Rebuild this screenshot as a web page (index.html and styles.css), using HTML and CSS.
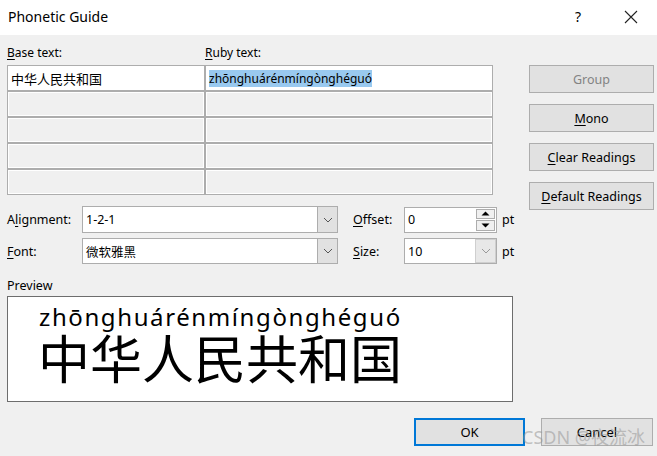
FILE: index.html
```html
<!DOCTYPE html>
<html>
<head>
<meta charset="utf-8">
<link rel="stylesheet" href="styles.css">
</head>
<body>
<div class="dialog">
  <div class="titlebar">
    <span class="title">Phonetic Guide</span>
    <div class="title-icons">
      <span class="help">?</span>
      <svg class="close" width="14" height="14" viewBox="0 0 14 14"><path d="M1 1 L13 13 M13 1 L1 13" stroke="#222" stroke-width="1.1" fill="none"/></svg>
    </div>
  </div>
  <div class="content">
    <div class="top">
      <div class="table-area">
        <div class="heads">
          <span class="head-base"><u>B</u>ase text:</span>
          <span class="head-ruby"><u>R</u>uby text:</span>
        </div>
        <div class="rtable">
          <div class="cell active cjk">中华人民共和国</div>
          <div class="cell active"><span class="sel">zhōnghuárénmíngònghéguó</span></div>
          <div class="cell"></div><div class="cell"></div>
          <div class="cell"></div><div class="cell"></div>
          <div class="cell"></div><div class="cell"></div>
          <div class="cell"></div><div class="cell"></div>
        </div>
      </div>
      <div class="side">
        <div class="btn disabled">Group</div>
        <div class="btn"><u>M</u>ono</div>
        <div class="btn"><u>C</u>lear Readings</div>
        <div class="btn"><u>D</u>efault Readings</div>
      </div>
    </div>
    <div class="form">
      <span class="lbl">A<u>l</u>ignment:</span>
      <div class="combo r1"><span class="val">1-2-1</span><span class="drop"><svg width="10" height="6" viewBox="0 0 10 6"><path d="M1 1 L5 5 L9 1" stroke="#555" fill="none"/></svg></span></div>
      <span></span>
      <span class="lbl"><u>O</u>ffset:</span>
      <div class="spin r1"><span class="val">0</span><span class="spinbtns"><span class="sb"><svg width="9" height="5" viewBox="0 0 9 5"><path d="M0.5 4.5 L4.5 0.5 L8.5 4.5 Z" fill="#000"/></svg></span><span class="sb"><svg width="9" height="5" viewBox="0 0 9 5"><path d="M0.5 0.5 L4.5 4.5 L8.5 0.5 Z" fill="#000"/></svg></span></span></div>
      <span class="pt">pt</span>

      <span class="lbl"><u>F</u>ont:</span>
      <div class="combo r2"><span class="val cjk">微软雅黑</span><span class="drop"><svg width="10" height="6" viewBox="0 0 10 6"><path d="M1 1 L5 5 L9 1" stroke="#555" fill="none"/></svg></span></div>
      <span></span>
      <span class="lbl"><u>S</u>ize:</span>
      <div class="combo r2 small"><span class="val">10</span><span class="drop light"><svg width="10" height="6" viewBox="0 0 10 6"><path d="M1 1 L5 5 L9 1" stroke="#999" fill="none"/></svg></span></div>
      <span class="pt">pt</span>
    </div>
    <div class="preview-label">Preview</div>
    <div class="preview">
      <div class="ruby-block">
        <div class="pinyin">zhōnghuárénmíngònghéguó</div>
        <div class="hanzi">中华人民共和国</div>
      </div>
    </div>
    <div class="footer">
      <div class="btn ok">OK</div>
      <div class="btn cancel">Cancel</div>
      <span class="watermark">CSDN @夜流冰</span>
    </div>
  </div>
</div>
</body>
</html>
```

FILE: styles.css
```css
* { box-sizing: border-box; }
html, body { margin: 0; padding: 0; }
body {
  width: 657px;
  height: 456px;
  overflow: hidden;
  background: #f0f0f0;
  font-family: "Noto Sans", "Noto Sans CJK SC", sans-serif;
  font-size: 12px;
  color: #000;
}
u { text-decoration: underline; text-underline-offset: 2px; }
.cjk { font-family: "Noto Sans CJK SC", sans-serif; }

.titlebar {
  height: 35px;
  background: #fff;
  display: flex;
  align-items: center;
  justify-content: space-between;
  padding: 0 19px 2px 8px;
}
.title { font-size: 14px; }
.title-icons { display: flex; align-items: center; gap: 43px; }
.help { font-size: 14px; }
.close { display: block; }

.content { padding: 0 4px 0 7px; position: relative; }

.top { display: flex; align-items: flex-start; height: 159px; }
.table-area { width: 486px; }
.heads { height: 30px; display: flex; align-items: center; padding-top: 5px; }
.head-base { width: 198px; }
.rtable {
  display: grid;
  grid-template-columns: 196px 286px;
  grid-auto-rows: 24px;
  gap: 2px;
  padding: 1px;
  background: #adadad;
}
.cell { background: #f0f0f0; border: 1px solid #fff; }
.cell.active {
  background: #fff;
  display: flex;
  align-items: center;
  padding-left: 2px;
  font-size: 13px;
}
.sel { background: #99c9ef; line-height: 17px; font-size: 12px; }

.side {
  margin-left: 36px;
  padding-top: 30px;
  display: flex;
  flex-direction: column;
  gap: 11px;
}
.btn {
  width: 125px;
  height: 28px;
  background: #e1e1e1;
  border: 1px solid #adadad;
  display: flex;
  align-items: center;
  justify-content: center;
  font-size: 12.5px;
}
.btn.disabled { color: #838383; }

.form {
  margin-top: 12px;
  display: grid;
  grid-template-columns: 75px 256px 15px 51px 93px auto;
  grid-template-rows: 27px 26px;
  row-gap: 5px;
  align-items: center;
}
.lbl { font-size: 12.5px; }
.pt { padding-left: 5px; font-size: 12.5px; }
.combo, .spin {
  height: 100%;
  background: #fff;
  border: 1px solid #adadad;
  display: flex;
  align-items: stretch;
}
.val { flex: 1; display: flex; align-items: center; padding-left: 3px; font-size: 12.5px; }
.drop {
  width: 21px;
  background: #e1e1e1;
  border: 1px solid #adadad;
  margin: -1px -1px -1px 0;
  display: flex;
  align-items: center;
  justify-content: center;
}
.drop.light { background: #e8e8e8; border-color: #cfcfcf; margin: 0; }
.spin { height: 26px; }
.spinbtns {
  width: 20px;
  display: flex;
  flex-direction: column;
  padding: 1px 1px 1px 0;
  gap: 1px;
}
.sb {
  flex: 1;
  background: #f0f0f0;
  border: 1px solid #adadad;
  display: flex;
  align-items: center;
  justify-content: center;
}

.preview-label { margin-top: 13px; height: 18px; font-size: 12.5px; line-height: 18px; }
.preview {
  margin-top: 1px;
  width: 506px;
  height: 106px;
  background: #fff;
  border: 1px solid #6d6d6d;
  padding: 8px 0 0 31px;
}
.ruby-block { width: 370px; }
.pinyin {
  font-family: "Noto Sans", sans-serif;
  font-size: 24px;
  line-height: 24px;
  letter-spacing: 1.6px;
  white-space: nowrap;
}
.hanzi {
  font-family: "Noto Sans CJK SC", sans-serif;
  font-size: 52px;
  line-height: 56px;
  margin-left: -1px;
  white-space: nowrap;
}

.footer {
  margin-top: 16px;
  display: flex;
  justify-content: flex-end;
  gap: 16px;
  position: relative;
}
.btn.ok { width: 111px; border: 2px solid #0078d7; font-size: 13px; }
.btn.cancel { width: 112px; font-size: 13px; }
.watermark {
  position: absolute;
  right: 8px;
  top: 5px;
  font-family: "Noto Sans", "Noto Sans CJK SC", sans-serif;
  font-size: 18px;
  color: rgba(150, 150, 150, 0.55);
  white-space: nowrap;
}
```
